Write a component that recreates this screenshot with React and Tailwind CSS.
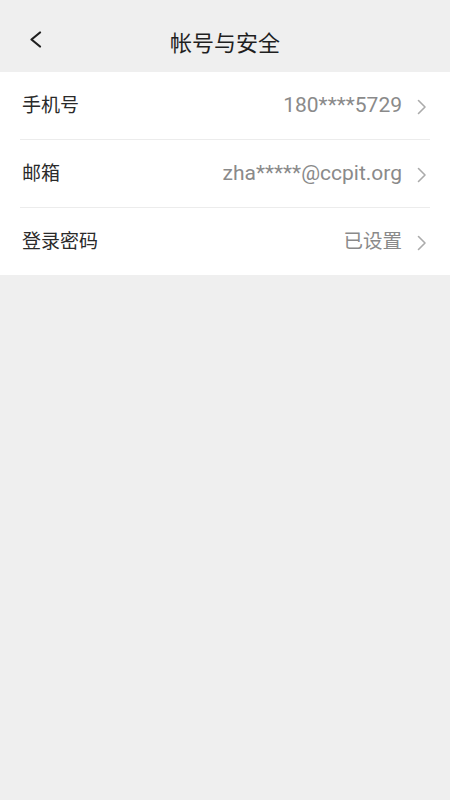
import React from "react";

const font = { fontFamily: '"Noto Sans", "Noto Sans CJK SC", sans-serif' };
const valueFont = { fontFamily: 'Roboto, "Noto Sans CJK SC", sans-serif' };

function ChevronRight() {
  return (
    <svg width="10" height="16" viewBox="0 0 10 16" fill="none" className="shrink-0 mt-[3px]">
      <path d="M1.5 1.5 L8 8 L1.5 14.5" stroke="#ababab" strokeWidth="1.6" strokeLinecap="round" strokeLinejoin="round" />
    </svg>
  );
}

function Row({ label, value, cjk, last }) {
  return (
    <div>
      <div className="flex h-[67px] items-center pl-[22px] pr-[23px]">
        <span className="text-[19px] text-[#2a2a2a] leading-none -mt-[1px]">{label}</span>
        <div className="ml-auto flex items-center gap-[15px]">
          <span
            className={cjk ? "text-[19.5px] text-[#8a8a8a] leading-none" : "text-[21px] text-[#8a8a8a] leading-none"}
            style={valueFont}
          >
            {value}
          </span>
          <ChevronRight />
        </div>
      </div>
      {!last && <div className="mx-[20px] h-px bg-[#ececec]" />}
    </div>
  );
}

export default function App() {
  return (
    <div className="min-h-[800px] w-[450px] bg-[#efefef]" style={font}>
      <div className="relative flex h-[72px] items-center justify-center">
        <div className="absolute left-[29px] top-[31px]">
          <svg width="13" height="17" viewBox="0 0 13 17" fill="none">
            <path d="M11 1.5 L2.5 8.5 L11 15.5" stroke="#1f1f1f" strokeWidth="2.2" strokeLinecap="round" strokeLinejoin="round" />
          </svg>
        </div>
        <span className="mt-[12px] text-[22px] text-[#1f1f1f] leading-none">帐号与安全</span>
      </div>
      <div className="bg-white">
        <Row label="手机号" value="180****5729" />
        <Row label="邮箱" value="zha*****@ccpit.org" />
        <Row label="登录密码" value="已设置" cjk last />
      </div>
    </div>
  );
}
